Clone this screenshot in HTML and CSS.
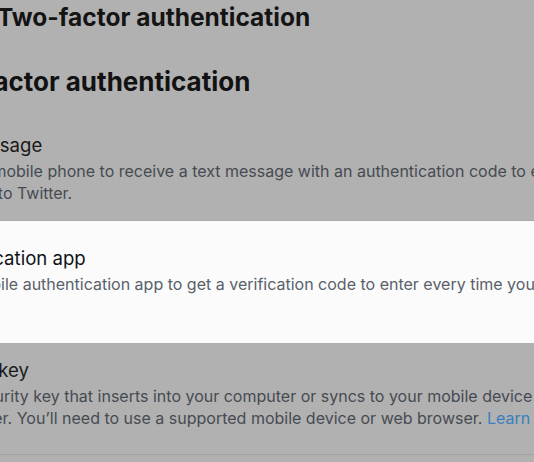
FILE: index.html
```html
<!DOCTYPE html>
<html>

	<head>
		<meta charset="UTF-8">
		<title>Two-factor authentication</title>
		<link rel="stylesheet" href="styles.css">
	</head>

	<body>
		<div class="page">
			<header class="topbar">
				<h1>Two-factor authentication</h1>
			</header>

			<section class="settings">
				<h2>Two-factor authentication</h2>

				<div class="option option-first">
					<div class="option-title">Text message</div>
					<p class="option-desc">Use your mobile phone to receive a text message with an authentication code to enter when you log in to Twitter.</p>
				</div>

				<div class="option option-active">
					<div class="option-title">Authentication app</div>
					<p class="option-desc">Use a mobile authentication app to get a verification code to enter every time you log in.</p>
				</div>

				<div class="option option-last">
					<div class="option-title">Security key</div>
					<p class="option-desc">Use a security key that inserts into your computer or syncs to your mobile device when you log in to Twitter. You’ll need to use a supported mobile device or web browser. <a href="#">Learn more</a></p>
				</div>
			</section>
		</div>
	</body>

</html>
```

FILE: styles.css
```css
body {
	margin: 0;
	background-color: #b1b1b1;
	font-family: Inter, "Noto Sans", sans-serif;
	overflow: hidden;
}

.page {
	margin-left: -80px;
	width: 721px;
}

.topbar h1 {
	margin: 0;
	padding-left: 77px;
	font-size: 24.5px;
	line-height: 34px;
	font-weight: 700;
	color: #141414;
}

.settings h2 {
	margin: 32px 0 20px -2px;
	font-size: 26px;
	line-height: 32px;
	font-weight: 700;
	color: #121212;
}

.option {
	padding: 15px 0 25px;
}

.option-first {
	padding-bottom: 16px;
	border-bottom: 1px solid #a9a9a9;
}

.option-active {
	margin: 0 -200px;
	padding: 25px 200px 48px;
	background-color: #fbfbfb;
}

.option-last {
	border-bottom: 1px solid #a2a2a2;
}

.option-title {
	font-size: 18.6px;
	line-height: 24px;
	color: #1a1a1a;
}

.option-desc {
	margin: 3px 0 0;
	font-size: 16px;
	line-height: 22px;
	color: #464b51;
}

.option-active .option-title {
	color: #0f1419;
}

.option-active .option-desc {
	color: #59616a;
}

.option-desc a {
	color: #3a7fc0;
	text-decoration: none;
}
```
